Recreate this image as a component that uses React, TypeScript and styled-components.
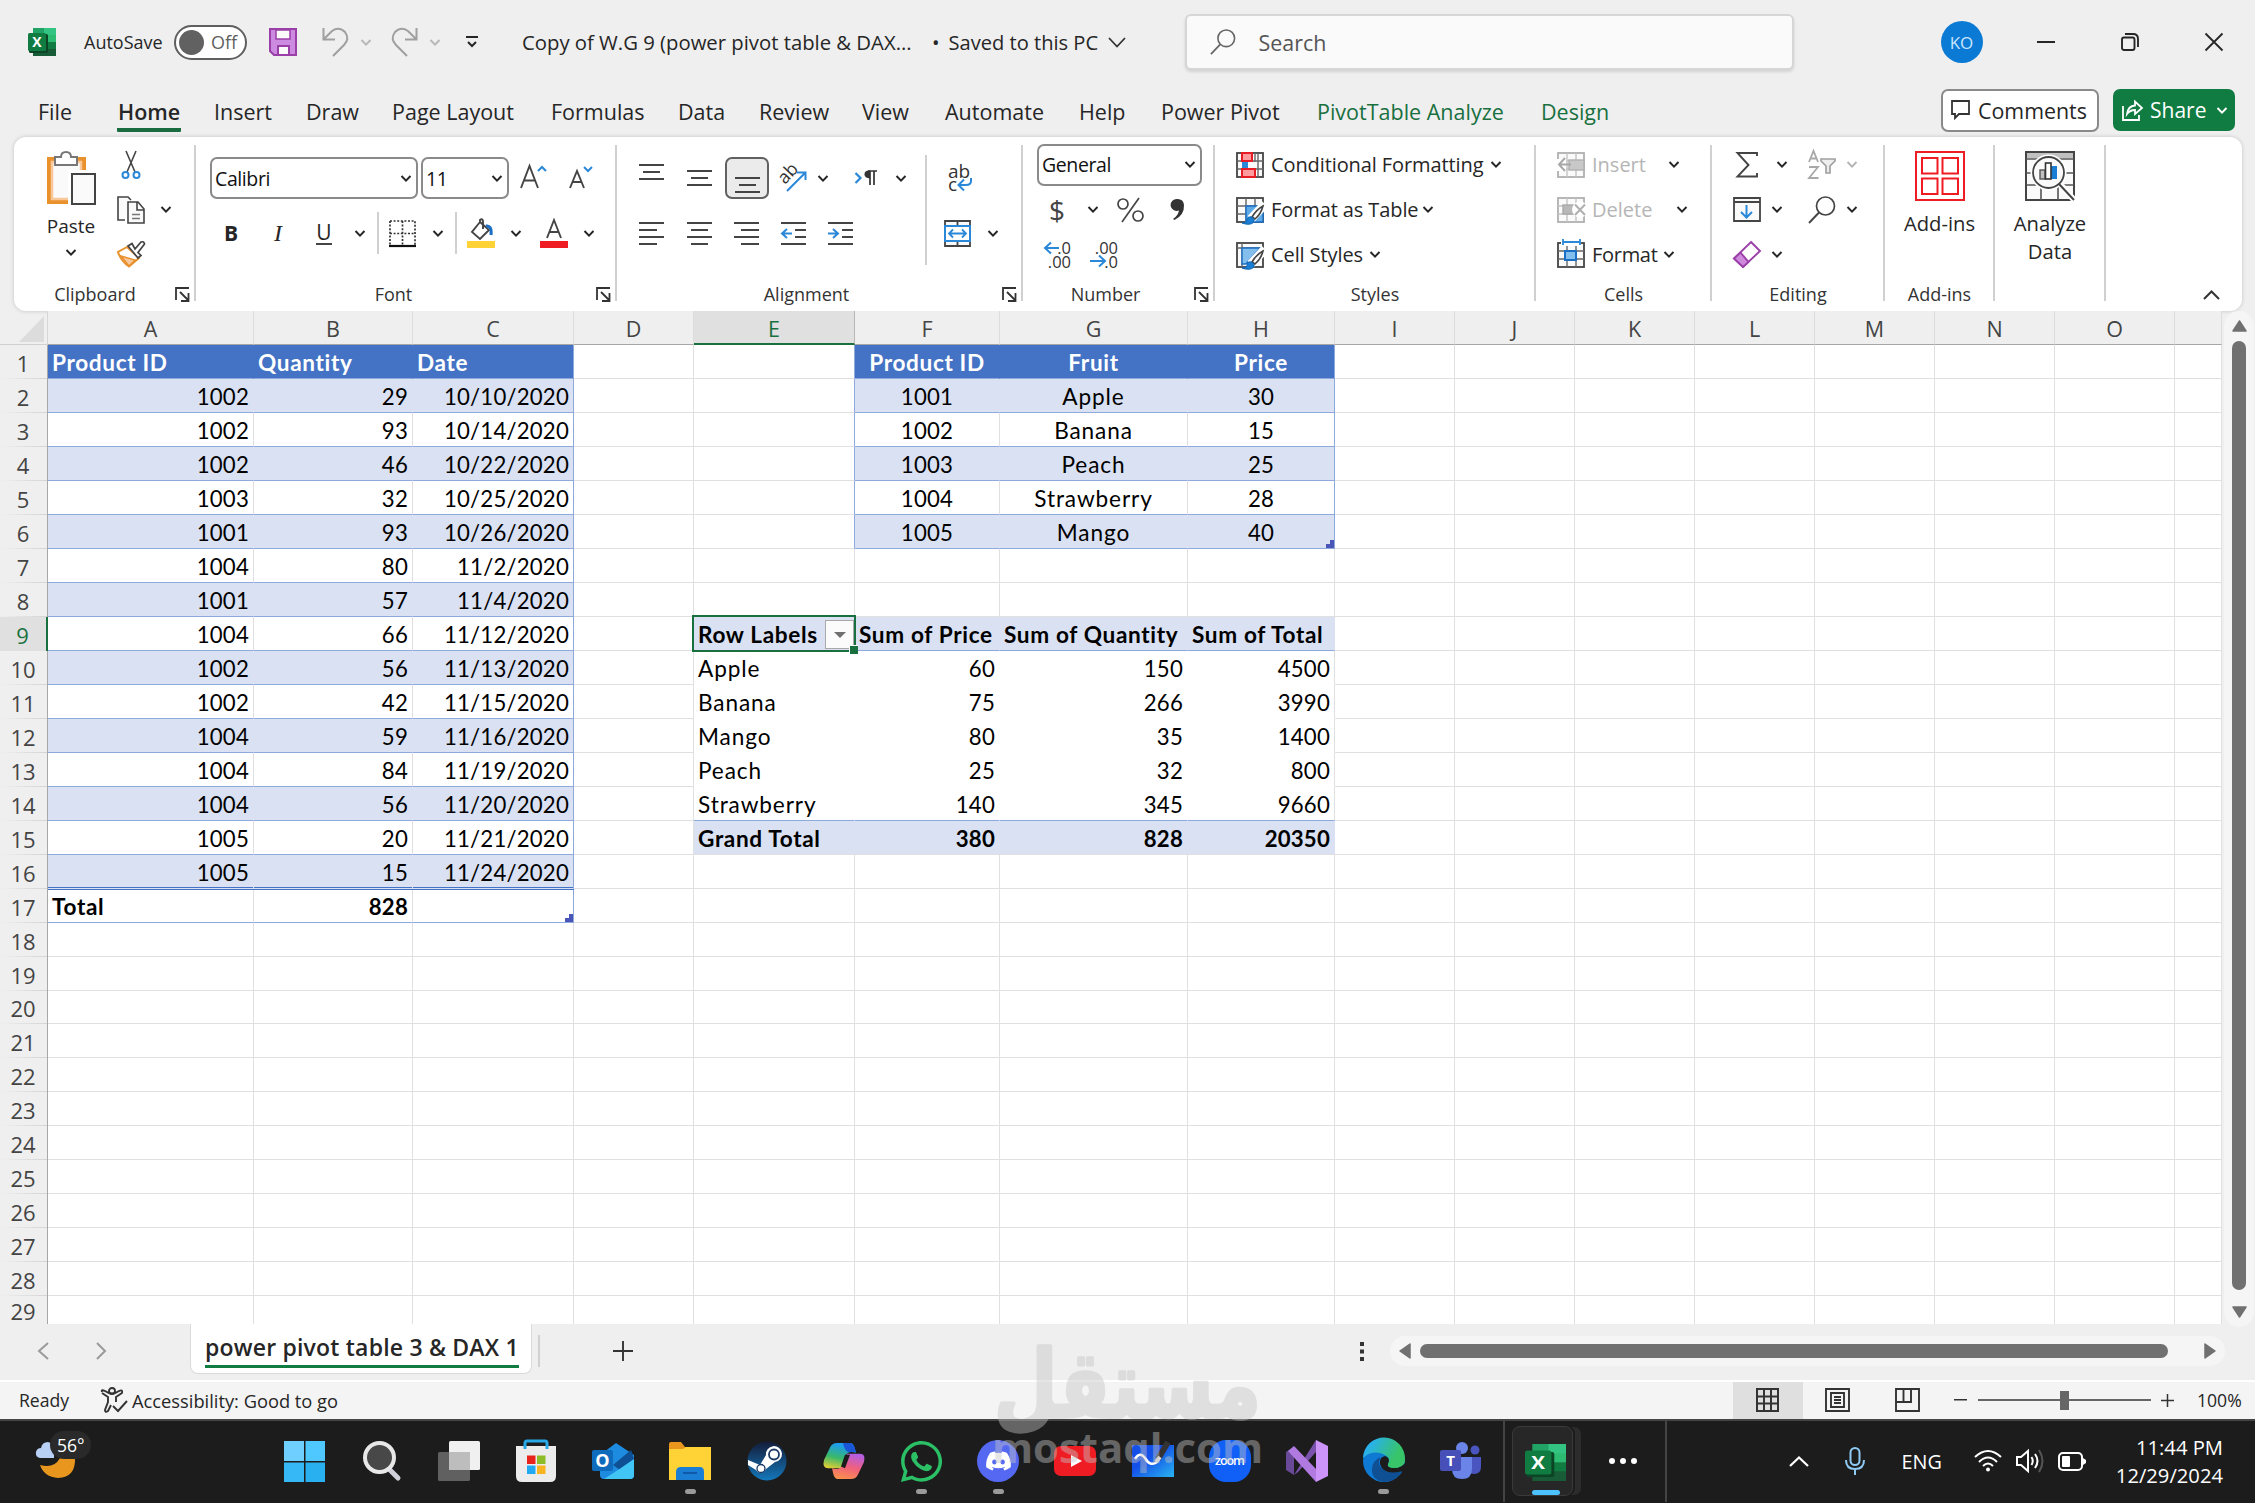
import React from 'react';
import styled, { createGlobalStyle, css } from 'styled-components';
import { FaDiscord, FaWhatsapp } from 'react-icons/fa';

const UI = `'Open Sans', 'Noto Sans', sans-serif`;
const CELL = `Lato, 'Open Sans', sans-serif`;

const GlobalStyle = createGlobalStyle`
    * { box-sizing: border-box; }
    body { margin: 0; background: #efefef; font-family: ${UI}; color: #262626; overflow: hidden; }
    svg { display: block; flex: none; overflow: visible; }
`;

const Window = styled.div`
    position: relative;
    width: 2255px;
    height: 1503px;
    display: flex;
    flex-direction: column;
    overflow: hidden;
    background: #efefef;
`;

/* ---------- shared ---------- */

const Slot = styled.div<{ $w?: number; $ml?: number }>`
    flex: none;
    display: flex;
    align-items: center;
    justify-content: center;
    width: ${p => (p.$w ? p.$w + 'px' : 'auto')};
    margin-left: ${p => p.$ml || 0}px;
`;

const Label = styled.div<{ $size?: number; $w?: number; $ml?: number; $color?: string; $ls?: number }>`
    flex: none;
    white-space: nowrap;
    font-size: ${p => p.$size || 20}px;
    letter-spacing: ${p => p.$ls || 0}px;
    width: ${p => (p.$w ? p.$w + 'px' : 'auto')};
    margin-left: ${p => p.$ml || 0}px;
    color: ${p => p.$color || '#262626'};
`;

const Chevron = ({ ml = 0, color = '#262626', w = 20 }: { ml?: number; color?: string; w?: number }) => (
    <Slot $w={w} $ml={ml}>
        <svg width="10" height="7" viewBox="0 0 10 7">
            <path d="M0.5 1 L5 5.6 L9.5 1" fill="none" stroke={color} strokeWidth="2" />
        </svg>
    </Slot>
);

const ExcelIcon = ({ w, h }: { w: number; h: number }) => (
    <svg width={w} height={h} viewBox="0 0 28 28" preserveAspectRatio="none">
        <rect x="5" y="0" width="12" height="14" fill="#21a366" />
        <rect x="16" y="0" width="12" height="14" fill="#33c481" />
        <rect x="16" y="7" width="12" height="7" fill="#2cbb70" />
        <rect x="5" y="14" width="12" height="14" fill="#185c37" />
        <rect x="16" y="14" width="12" height="7" fill="#107c41" />
        <rect x="16" y="21" width="12" height="7" fill="#185c37" />
        <rect x="1" y="6" width="19" height="19" rx="1.5" fill="#0b4526" />
        <rect x="0" y="5" width="18" height="18" rx="1.5" fill="#107c41" />
        <text x="9" y="19" textAnchor="middle" fontSize="14" fontWeight="700" fill="#fff">X</text>
    </svg>
);

/* ---------- title bar ---------- */

const TitleBar = styled.div`
    flex: none;
    height: 84px;
    display: flex;
    align-items: center;
`;

const Toggle = styled.div`
    flex: none;
    width: 73px;
    height: 35px;
    border: 2px solid #5f5f5f;
    border-radius: 18px;
    background: #fff;
    display: flex;
    align-items: center;
    padding-left: 3px;
    font-size: 18px;
    color: #5f5f5f;
`;

const Knob = styled.div`
    width: 25px;
    height: 25px;
    border-radius: 50%;
    background: #616161;
    margin-right: 7px;
`;

const SearchBox = styled.div`
    flex: none;
    width: 609px;
    height: 56px;
    margin-left: 59px;
    display: flex;
    align-items: center;
    padding-left: 23px;
    border: 2px solid #d6d6d6;
    border-radius: 6px;
    background: #fafafa;
    box-shadow: 0 2px 3px rgba(0, 0, 0, 0.12);
`;

const Avatar = styled.div`
    flex: none;
    width: 42px;
    height: 42px;
    margin-left: 147px;
    border-radius: 50%;
    background: #0a7ad4;
    color: #c9e6ff;
    font-size: 17px;
    display: flex;
    align-items: center;
    justify-content: center;
`;

/* ---------- tabs ---------- */

const TabBar = styled.div`
    flex: none;
    height: 53px;
    display: flex;
    padding-left: 37px;
`;

const Tab = styled.div<{ $w: number; $color?: string }>`
    flex: none;
    width: ${p => p.$w}px;
    font-size: 21.5px;
    line-height: 30px;
    padding-top: 13px;
    padding-left: 1px;
    white-space: nowrap;
    color: ${p => p.$color || '#262626'};
`;

const ActiveTab = styled.span`
    display: inline-block;
    width: 64px;
    height: 35px;
    margin-left: -1px;
    padding-left: 1px;
    font-weight: 600;
    border-bottom: 4px solid #186c3f;
    border-radius: 1px;
`;

const CommentsButton = styled.div`
    flex: none;
    width: 158px;
    height: 43px;
    margin: 5px 14px 0 auto;
    border: 2px solid #8a8a8a;
    border-radius: 7px;
    background: #fff;
    display: flex;
    align-items: center;
    padding-left: 8px;
`;

const ShareButton = styled.div`
    flex: none;
    width: 122px;
    height: 42px;
    margin: 5px 20px 0 0;
    border-radius: 7px;
    background: #107c41;
    display: flex;
    align-items: center;
    padding-left: 9px;
`;

/* ---------- ribbon ---------- */

const Ribbon = styled.div`
    flex: none;
    width: 2228px;
    height: 174px;
    margin-left: 14px;
    padding-top: 8px;
    display: flex;
    align-items: flex-start;
    background: #fff;
    border-radius: 12px;
    box-shadow: 0 0 4px rgba(0, 0, 0, 0.18);
`;

const GroupBox = styled.div<{ $w: number }>`
    flex: none;
    width: ${p => p.$w}px;
    height: 163px;
    display: flex;
    flex-direction: column;
`;

const GroupBody = styled.div`
    height: 137px;
    display: flex;
`;

const GroupFooter = styled.div`
    height: 26px;
    display: flex;
    align-items: center;
    font-size: 18px;
    color: #333;
`;

const FooterText = styled.div<{ $w: number }>`
    width: ${p => p.$w}px;
    padding: 0 0 2px 1px;
    text-align: center;
`;

const Divider = styled.div<{ $h?: number; $ml?: number; $mt?: number }>`
    flex: none;
    width: 2px;
    height: ${p => p.$h || 156}px;
    margin-left: ${p => p.$ml || 0}px;
    margin-top: ${p => p.$mt || 0}px;
    background: #d0d0d0;
`;

const ThreeRows = styled.div`
    flex: none;
    margin-top: -3px;
    display: grid;
    grid-template-rows: repeat(3, 45px);
    height: 135px;
`;

const TwoRows = styled.div<{ $w?: number }>`
    flex: none;
    width: ${p => (p.$w ? p.$w + 'px' : 'auto')};
    padding-top: 6px;
    display: grid;
    grid-template-rows: 54px 56px;
    height: 116px;
`;

const Row = styled.div`
    display: flex;
    align-items: center;
`;

const BigButton = styled.div<{ $w: number; $ml?: number }>`
    width: ${p => p.$w}px;
    margin-left: ${p => p.$ml || 0}px;
    padding-top: 6px;
    display: flex;
    flex-direction: column;
    align-items: center;
    text-align: center;
    font-size: 20px;
    line-height: 28px;
`;

const BigLabel = styled.div<{ $size?: number; $mt?: number }>`
    margin-top: ${p => p.$mt ?? 8}px;
    font-size: ${p => p.$size || 20.2}px;
`;

const Combo = styled.div<{ $w: number; $ml: number }>`
    flex: none;
    width: ${p => p.$w}px;
    height: 42px;
    margin-left: ${p => p.$ml}px;
    display: flex;
    align-items: center;
    justify-content: space-between;
    padding: 0 0 0 3px;
    border: 2px solid #8a8a8a;
    border-radius: 7px;
    font-size: 19.5px;
    letter-spacing: -0.4px;
    color: #111;
`;

const Letter = styled.div<{ $kind: 'b' | 'i' | 'u' }>`
    font-size: 21px;
    line-height: 24px;
    ${p => p.$kind === 'b' && css`font-weight: 700;`}
    ${p => p.$kind === 'i' && css`font-style: italic; font-family: 'Liberation Serif', serif; font-size: 24px;`}
    ${p => p.$kind === 'u' && css`border-bottom: 2px solid #444; line-height: 22px;`}
`;

const Pressed = styled.div`
    width: 44px;
    height: 42px;
    border: 2px solid #616161;
    border-radius: 7px;
    background: #ebebeb;
    display: flex;
    justify-content: center;
    padding-top: 18px;
`;

const Raised = styled.div`
    padding-bottom: 12px;
`;

const Launcher = styled.svg<{ $mr: number }>`
    margin: 0 ${p => p.$mr}px 1px auto;
`;

const Collapse = styled.div`
    margin: 145px 22px 0 auto;
`;

const GroupView = ({ w, fw, name, launch, children }: { w: number; fw?: number; name?: string; launch?: number; children?: React.ReactNode }) => (
    <>
        <GroupBox $w={w}>
            <GroupBody>{children}</GroupBody>
            <GroupFooter>
                <FooterText $w={fw || w}>{name}</FooterText>
                {launch !== undefined && (
                    <Launcher $mr={launch} width="15" height="15" viewBox="0 0 15 15">
                        <path d="M1 13 V1 H14 M5 5 L13 13 M13.5 6 V14 H6" fill="none" stroke="#333" strokeWidth="1.8" />
                    </Launcher>
                )}
            </GroupFooter>
        </GroupBox>
        <Divider />
    </>
);

const Lines = ({ rows }: { rows: [number, number][] }) => (
    <svg width="25" height={(rows.length - 1) * 7 + 2} viewBox={`0 0 25 ${(rows.length - 1) * 7 + 2}`}>
        {rows.map(([x, w], i) => (
            <rect key={i} x={x} y={i * 7} width={w} height="2" fill="#444" />
        ))}
    </svg>
);

const blue = '#2b88d8';

const TableIcon = ({ kind }: { kind: 'cond' | 'table' | 'cell' | 'insert' | 'delete' | 'format' }) => {
    const dim = kind === 'insert' || kind === 'delete';
    const line = dim ? '#b0b0b0' : '#444';
    return (
        <svg width="28" height="26" viewBox="0 0 28 26">
            <rect x="1" y="1" width="26" height="24" fill="#fafafa" stroke={line} strokeWidth="1.8" />
            {kind !== 'cell' && <path d="M1 9 H27 M1 17 H27 M10 1 V25 M19 1 V25" stroke={dim ? '#c4c4c4' : '#666'} strokeWidth="1.4" />}
            {kind === 'cell' && <path d="M1 6 H27 M6 1 V25" stroke="#666" strokeWidth="1.4" />}
            {kind === 'cond' && (
                <>
                    <rect x="13" y="10" width="9" height="6" fill="#fafafa" />
                    <path d="M22 1 V25" stroke="#666" strokeWidth="1.4" />
                    <rect x="6" y="9" width="6" height="8" fill={blue} />
                    <rect x="6" y="1" width="10" height="8" fill="#ff9a9e" stroke="#e81c24" strokeWidth="2" />
                    <rect x="6" y="17" width="13" height="8" fill="#ff9a9e" stroke="#e81c24" strokeWidth="2" />
                </>
            )}
            {(kind === 'table' || kind === 'cell') && (
                <>
                    <path d={kind === 'table' ? 'M10 9 H27 V25 H10 Z' : 'M6 6 H24 L10 22 H6 Z'} fill={kind === 'table' ? '#5ea9e6' : '#83beec'} stroke="#1a6fc4" strokeWidth="1.4" />
                    <path d="M29 7 L15 22" stroke="#fff" strokeWidth="9" />
                    <path d="M27 9 Q20 13 16 20 L19 22 Q25 17 27 9 Z" fill="#fff" stroke="#444" strokeWidth="1.6" />
                    <path d="M16 20 Q11 19 11 24 Q9 26 6 26 Q14 29 18 25 Q19 23 16 20Z" fill="#1a7fd4" stroke="#1464b0" strokeWidth="1" />
                </>
            )}
            {kind === 'insert' && (
                <>
                    <rect x="12" y="8" width="15" height="10" fill="#c8c8c8" stroke="#b0b0b0" strokeWidth="1.4" />
                    <path d="M-1 7 H9 V19 H-1 Z" fill="#fff" />
                    <path d="M8 6 L2 12.5 L8 19 M2 12.5 H14" fill="none" stroke="#a8a8a8" strokeWidth="2" />
                </>
            )}
            {kind === 'delete' && (
                <>
                    <rect x="6" y="8" width="11" height="9" fill="#b8b8b8" stroke="#a8a8a8" strokeWidth="1.4" />
                    <circle cx="23" cy="12.5" r="8" fill="#fff" />
                    <path d="M18 7.5 L28 18 M28 7.5 L18 18" stroke="#b0b0b0" strokeWidth="2" />
                </>
            )}
            {kind === 'format' && (
                <>
                    <rect x="4" y="-2" width="20" height="6" fill="#fff" />
                    <path d="M6 -3 V3 M23 -3 V3 M6 0 H23" stroke={blue} strokeWidth="1.8" />
                    <rect x="8" y="9" width="11" height="9" fill="#83beec" stroke="#1a6fc4" strokeWidth="2" />
                </>
            )}
        </svg>
    );
};

const Magnifier = ({ w = 28, color = '#444' }: { w?: number; color?: string }) => (
    <svg width={w} height={w} viewBox="0 0 28 28">
        <circle cx="17.5" cy="10" r="9" fill="none" stroke={color} strokeWidth="1.7" />
        <path d="M11 16.5 L1 27" stroke={color} strokeWidth="1.9" />
    </svg>
);

const DecimalIcon = ({ inc }: { inc?: boolean }) => (
    <svg width="29" height="28" viewBox="0 0 29 28" fontSize="16.5" fill="#333">
        <text x="28" y="12.5" textAnchor="end">{inc ? '.00' : '.0'}</text>
        <text x="28" y="27" textAnchor="end">{inc ? '.0' : '.00'}</text>
        {inc ? (
            <path d="M0 20 H14 M9 14.5 L15 20 L9 25.5" fill="none" stroke={blue} strokeWidth="2" />
        ) : (
            <path d="M16 7 H2 M8 1.5 L2 7 L8 12.5" fill="none" stroke={blue} strokeWidth="2" />
        )}
    </svg>
);

const PasteChevron = styled.div`
    height: 20px;
    display: flex;
    align-items: center;
    margin-top: 2px;
`;

const RibbonView = () => (
    <Ribbon>
        <GroupView w={180} fw={161} name="Clipboard" launch={4}>
            <BigButton $w={80} $ml={17}>
                <svg width="50" height="54" viewBox="0 0 50 54">
                    <rect x="3" y="8" width="35" height="43" fill="#fafafa" stroke="#e8912d" strokeWidth="4" />
                    <rect x="6" y="11" width="29" height="37" fill="none" stroke="#f8c79a" strokeWidth="2.5" />
                    <path d="M9 14 V6 H15 Q15 1 20 1 Q25 1 25 6 H31 V14 Z" fill="#fff" stroke="#777" strokeWidth="2" />
                    <rect x="22" y="19" width="28" height="35" fill="#fff" />
                    <rect x="26" y="23" width="23" height="30" fill="#fafafa" stroke="#444" strokeWidth="2" />
                </svg>
                <BigLabel $size={19} $mt={7}>Paste</BigLabel>
                <PasteChevron><Chevron /></PasteChevron>
            </BigButton>
            <ThreeRows>
                <Row>
                    <Slot $w={36} $ml={2}>
                        <svg width="18" height="28" viewBox="0 0 18 28">
                            <path d="M4 0 L13 21 M14 0 L5 21" stroke="#444" strokeWidth="1.6" />
                            <circle cx="3.5" cy="24" r="3" fill="#fff" stroke={blue} strokeWidth="2" />
                            <circle cx="14.5" cy="24" r="3" fill="#fff" stroke={blue} strokeWidth="2" />
                        </svg>
                    </Slot>
                </Row>
                <Row>
                    <Slot $w={36} $ml={2}>
                        <svg width="28" height="28" viewBox="0 0 28 28">
                            <path d="M8 24 H1 V1 H11 L14 4" fill="#fafafa" stroke="#444" strokeWidth="1.6" />
                            <path d="M11 6 H21 L27 13 V27 H11 Z M20 6 V14 H27" fill="#fafafa" stroke="#444" strokeWidth="1.6" />
                            <path d="M15 18.5 H23 M15 22.5 H23" stroke="#777" strokeWidth="1.4" />
                        </svg>
                    </Slot>
                    <Chevron ml={7} />
                </Row>
                <Row>
                    <Slot $w={36} $ml={2}>
                        <svg width="28" height="27" viewBox="0 0 28 27">
                            <path d="M10 6 L1 11 Q4 20 12 25.5 L22 17 Z" fill="#fff" stroke="#e8912d" strokeWidth="2" />
                            <path d="M4 15 L18 19 L12 25 Z" fill="#f8c79a" stroke="#e8912d" strokeWidth="1.4" />
                            <path d="M11 5 L15 2.5 L18 8 L24 1 Q27 0 27.5 3 L21 11.5 L24 14.5 L21 17 Z" fill="#fff" stroke="#444" strokeWidth="1.7" />
                        </svg>
                    </Slot>
                </Row>
            </ThreeRows>
        </GroupView>

        <GroupView w={419} fw={394} name="Font" launch={4}>
            <TwoRows>
                <Row>
                    <Combo $w={208} $ml={14}>Calibri<Chevron /></Combo>
                    <Combo $w={88} $ml={3}>11<Chevron /></Combo>
                    <Slot $w={27} $ml={11}>
                        <svg width="27" height="26" viewBox="0 0 27 26">
                            <path d="M1 23 L9.5 1 L18 23 M4 15.5 H15" fill="none" stroke="#444" strokeWidth="1.9" />
                            <path d="M18 6 L22 2 L26 6" fill="none" stroke={blue} strokeWidth="2" />
                        </svg>
                    </Slot>
                    <Slot $w={25} $ml={22}>
                        <svg width="25" height="26" viewBox="0 0 25 26">
                            <path d="M1 23 L8 6 L15 23 M3.5 17 H12.5" fill="none" stroke="#444" strokeWidth="1.9" />
                            <path d="M15 2 L19 6 L23 2" fill="none" stroke={blue} strokeWidth="2" />
                        </svg>
                    </Slot>
                </Row>
                <Row>
                    <Slot $w={30} $ml={20}><Letter $kind="b">B</Letter></Slot>
                    <Slot $w={30} $ml={17}><Letter $kind="i">I</Letter></Slot>
                    <Slot $w={30} $ml={16}><Letter $kind="u">U</Letter></Slot>
                    <Chevron ml={11} />
                    <Divider $h={42} $ml={7} />
                    <Slot $w={27} $ml={10}>
                        <svg width="27" height="27" viewBox="0 0 27 27">
                            <path d="M1 1 H26 V25 M1 1 V25 M13.5 1 V25 M1 13.5 H26" fill="none" stroke="#333" strokeWidth="1.7" strokeDasharray="2 1.6" />
                            <path d="M0 26 H27" stroke="#111" strokeWidth="2.2" />
                        </svg>
                    </Slot>
                    <Chevron ml={12} />
                    <Divider $h={42} $ml={7} />
                    <Slot $w={28} $ml={10}>
                        <svg width="28" height="29" viewBox="0 0 28 29">
                            <path d="M13 3 L22 11 L13 20 L5 13 Z M13 3 V1 Q15 -1 16 2 V10" fill="none" stroke="#444" strokeWidth="1.9" />
                            <path d="M19 7 Q25 6 24 16" fill="none" stroke="#1a6fc4" strokeWidth="3" />
                            <rect x="0" y="22" width="28" height="7" fill="#ffd335" />
                        </svg>
                    </Slot>
                    <Chevron ml={11} />
                    <Slot $w={28} $ml={14}>
                        <svg width="28" height="29" viewBox="0 0 28 29">
                            <path d="M7 19 L14 1 L21 19 M9.5 13 H18.5" fill="none" stroke="#444" strokeWidth="1.9" />
                            <rect x="0" y="22" width="28" height="7" fill="#ef1c24" />
                        </svg>
                    </Slot>
                    <Chevron ml={11} />
                </Row>
            </TwoRows>
        </GroupView>

        <GroupView w={404} fw={378} name="Alignment" launch={4}>
            <TwoRows $w={308}>
                <Row>
                    <Slot $w={25} $ml={22}><Raised><Lines rows={[[0, 25], [4, 17], [0, 25]]} /></Raised></Slot>
                    <Slot $w={25} $ml={23}><Lines rows={[[0, 25], [4, 17], [0, 25]]} /></Slot>
                    <Slot $w={44} $ml={13}><Pressed><Lines rows={[[0, 25], [4, 17], [0, 25]]} /></Pressed></Slot>
                    <Slot $w={30} $ml={9}>
                        <svg width="30" height="28" viewBox="0 0 30 28">
                            <text x="0" y="0" fontSize="18" fill="#333" transform="translate(7 21) rotate(-47)">ab</text>
                            <path d="M9 27 L27 9 M19 8.5 H27.5 V16" fill="none" stroke={blue} strokeWidth="2" />
                        </svg>
                    </Slot>
                    <Chevron ml={5} />
                    <Slot $w={22} $ml={22}>
                        <svg width="22" height="16" viewBox="0 0 22 16">
                            <path d="M0.5 3 L5.5 8 L0.5 13" fill="none" stroke={blue} strokeWidth="2.2" />
                            <path d="M15 8.5 Q9.5 8 9.5 4.2 Q9.5 0.5 14 0.5 H15 Z" fill="#333" />
                            <path d="M13 1 H22 M15 1 V15 M19 1 V15" stroke="#333" strokeWidth="1.7" />
                        </svg>
                    </Slot>
                    <Chevron ml={14} />
                </Row>
                <Row>
                    <Slot $w={25} $ml={22}><Lines rows={[[0, 25], [0, 18], [0, 25], [0, 18]]} /></Slot>
                    <Slot $w={25} $ml={23}><Lines rows={[[0, 25], [4, 17], [0, 25], [4, 17]]} /></Slot>
                    <Slot $w={25} $ml={22}><Lines rows={[[0, 25], [7, 18], [0, 25], [7, 18]]} /></Slot>
                    {[0, 1].map(i => (
                        <Slot key={i} $w={25} $ml={22}>
                            <svg width="25" height="23" viewBox="0 0 25 23">
                                <path d="M0 1 H25 M14 8 H25 M14 15 H25 M0 22 H25" stroke="#444" strokeWidth="2" />
                                <path d={i ? 'M0 11.5 H9 M5 7 L10 11.5 L5 16' : 'M11 11.5 H2 M6 7 L1 11.5 L6 16'} fill="none" stroke={blue} strokeWidth="2" />
                            </svg>
                        </Slot>
                    ))}
                </Row>
            </TwoRows>
            <Divider $h={110} $mt={10} />
            <TwoRows>
                <Row>
                    <Slot $w={24} $ml={21}>
                        <svg width="24" height="28" viewBox="0 0 24 28" fontSize="19" fill="#333">
                            <text x="0" y="14">ab</text>
                            <text x="0" y="27">c</text>
                            <path d="M23 14 V17 Q23 21 18 21 H11 M16 15.5 L10.5 21 L16 26.5" fill="none" stroke={blue} strokeWidth="2" />
                        </svg>
                    </Slot>
                </Row>
                <Row>
                    <Slot $w={27} $ml={17}>
                        <svg width="27" height="27" viewBox="0 0 27 27">
                            <path d="M1 1 H26 V26 H1 Z M13.5 1 V26" fill="#fafafa" stroke="#444" strokeWidth="1.8" />
                            <rect x="1" y="6" width="25" height="15" fill="#fff" stroke={blue} strokeWidth="2" />
                            <path d="M5 13.5 H22 M9 9.5 L5 13.5 L9 17.5 M18 9.5 L22 13.5 L18 17.5" fill="none" stroke={blue} strokeWidth="1.8" />
                        </svg>
                    </Slot>
                    <Chevron ml={12} />
                </Row>
            </TwoRows>
        </GroupView>

        <GroupView w={190} fw={164} name="Number" launch={4}>
            <ThreeRows>
                <Row><Combo $w={165} $ml={14}>General<Chevron /></Combo></Row>
                <Row>
                    <Slot $w={24} $ml={22}><Label $size={28} $color="#444">$</Label></Slot>
                    <Chevron ml={14} />
                    <Slot $w={27} $ml={14}>
                        <svg width="27" height="26" viewBox="0 0 27 26" fill="none" stroke="#444" strokeWidth="1.7">
                            <circle cx="6" cy="7" r="5" />
                            <circle cx="21" cy="19" r="5" />
                            <path d="M22 1 L5 25" />
                        </svg>
                    </Slot>
                    <Slot $w={18} $ml={25}>
                        <svg width="14" height="21" viewBox="0 0 14 21">
                            <path d="M6.5 0 A6.3 6 0 1 0 8 11.6 Q7 17 2 20 L3.5 21 Q13.5 16 13 6 Q12.5 0 6.5 0Z" fill="#333" />
                        </svg>
                    </Slot>
                </Row>
                <Row>
                    <Slot $w={29} $ml={20}><DecimalIcon /></Slot>
                    <Slot $w={29} $ml={18}><DecimalIcon inc /></Slot>
                </Row>
            </ThreeRows>
        </GroupView>

        <GroupView w={319} fw={321} name="Styles">
            <ThreeRows>
                <Row><Slot $w={28} $ml={21}><TableIcon kind="cond" /></Slot><Label $ml={7} $w={215} $ls={-0.1}>Conditional Formatting</Label><Chevron /></Row>
                <Row><Slot $w={28} $ml={21}><TableIcon kind="table" /></Slot><Label $ml={7} $w={147} $ls={-0.1}>Format as Table</Label><Chevron /></Row>
                <Row><Slot $w={28} $ml={21}><TableIcon kind="cell" /></Slot><Label $ml={7} $w={94} $ls={-0.1}>Cell Styles</Label><Chevron /></Row>
            </ThreeRows>
        </GroupView>

        <GroupView w={174} name="Cells">
            <ThreeRows>
                <Row><Slot $w={28} $ml={21}><TableIcon kind="insert" /></Slot><Label $ml={7} $w={72} $color="#b5b5b5">Insert</Label><Chevron /></Row>
                <Row><Slot $w={28} $ml={21}><TableIcon kind="delete" /></Slot><Label $ml={7} $w={80} $color="#b5b5b5">Delete</Label><Chevron /></Row>
                <Row><Slot $w={28} $ml={21}><TableIcon kind="format" /></Slot><Label $ml={7} $w={67} $ls={-0.3}>Format</Label><Chevron /></Row>
            </ThreeRows>
        </GroupView>

        <GroupView w={171} name="Editing">
            <ThreeRows>
                <Row>
                    <Slot $w={28} $ml={21}>
                        <svg width="22" height="26" viewBox="0 0 22 26">
                            <path d="M21 4 V1 H1.5 L12.5 13 L1.5 24.5 H21 V21" fill="none" stroke="#444" strokeWidth="1.9" />
                        </svg>
                    </Slot>
                    <Chevron ml={11} />
                    <Slot $w={28} $ml={16}>
                        <svg width="28" height="29" viewBox="0 0 28 29">
                            <path d="M1 12 L5.5 1 L10 12 M2.5 8.5 H8.5 M1 17 H10 L1 28 H10.5" fill="none" stroke="#a8a8a8" strokeWidth="1.8" />
                            <path d="M13 9 H27 V11 L22 16 V23 H18 V16 L13 11 Z" fill="#eee" stroke="#a0a0a0" strokeWidth="1.7" />
                        </svg>
                    </Slot>
                    <Chevron ml={6} color="#b5b5b5" />
                </Row>
                <Row>
                    <Slot $w={28} $ml={21}>
                        <svg width="28" height="25" viewBox="0 0 28 25">
                            <path d="M1 1 H27 V24 H1 Z M1 5 H27" fill="#fafafa" stroke="#444" strokeWidth="1.8" />
                            <path d="M13.5 8 V20 M8 15 L13.5 20.5 L19 15" fill="none" stroke={blue} strokeWidth="2" />
                        </svg>
                    </Slot>
                    <Chevron ml={6} />
                    <Slot $w={28} $ml={21}><Magnifier /></Slot>
                    <Chevron ml={6} />
                </Row>
                <Row>
                    <Slot $w={28} $ml={21}>
                        <svg width="28" height="27" viewBox="0 0 28 27">
                            <path d="M18 1 L27 10 L10 26 L1 17.5 Z" fill="#fff" stroke="#9a3fa8" strokeWidth="1.9" />
                            <path d="M7.5 11.5 L15.5 21 L10 26 L1 17.5 Z" fill="#cf8ade" stroke="#9a3fa8" strokeWidth="1.9" />
                        </svg>
                    </Slot>
                    <Chevron ml={6} />
                </Row>
            </ThreeRows>
        </GroupView>

        <GroupView w={108} fw={110} name="Add-ins">
            <BigButton $w={108} $ml={1}>
                <svg width="50" height="50" viewBox="0 0 50 50" fill="#fff" stroke="#ef1c24" strokeWidth="2">
                    <rect x="1" y="1" width="48" height="48" />
                    <rect x="7" y="7" width="15.5" height="15.5" />
                    <rect x="27.5" y="7" width="15.5" height="15.5" />
                    <rect x="7" y="27.5" width="15.5" height="15.5" />
                    <rect x="27.5" y="27.5" width="15.5" height="15.5" />
                </svg>
                <BigLabel>Add-ins</BigLabel>
            </BigButton>
        </GroupView>

        <GroupView w={109}>
            <BigButton $w={109} $ml={1}>
                <svg width="50" height="50" viewBox="0 0 50 50">
                    <rect x="1" y="1" width="48" height="48" fill="#fafafa" stroke="#444" strokeWidth="2" />
                    <rect x="2" y="2" width="46" height="5" fill="#c0c0c0" />
                    <path d="M1 8 H49 M1 22 H49 M1 34 H49 M16 34 V49 M33 34 V49" stroke="#555" strokeWidth="1.6" />
                    <circle cx="23.5" cy="21.5" r="18" fill="#fff" />
                    <path d="M35 33 L50 50" stroke="#fff" strokeWidth="6" />
                    <circle cx="23.5" cy="21.5" r="15.5" fill="#fafafa" stroke="#444" strokeWidth="1.8" />
                    <path d="M34 33 L49 49" stroke="#444" strokeWidth="2" />
                    <rect x="15" y="19" width="5" height="9" fill="#c0c0c0" stroke="#555" strokeWidth="1.4" />
                    <rect x="26" y="15" width="6" height="13" fill="#1a7fd4" />
                    <rect x="20.5" y="12" width="5.5" height="16" fill="#fff" stroke="#333" strokeWidth="1.6" />
                </svg>
                <BigLabel>Analyze<br />Data</BigLabel>
            </BigButton>
        </GroupView>
        <Collapse>
            <svg width="17" height="10" viewBox="0 0 17 10">
                <path d="M1 9 L8.5 1.5 L16 9" fill="none" stroke="#333" strokeWidth="2" />
            </svg>
        </Collapse>
    </Ribbon>
);

/* ---------- sheet ---------- */

const LINE = '#e0e0e0';
const EDGE = '#8ea9db';
const BAND = '#d9e1f2';
const HEAD = '#4472c4';

const columns: [string, number][] = [
    ['A', 206], ['B', 159], ['C', 161], ['D', 120], ['E', 161], ['F', 145], ['G', 188], ['H', 147],
    ['I', 120], ['J', 120], ['K', 120], ['L', 120], ['M', 120], ['N', 120], ['O', 120], ['', 47],
];

const orders = [
    ['1002', '29', '10/10/2020'], ['1002', '93', '10/14/2020'], ['1002', '46', '10/22/2020'],
    ['1003', '32', '10/25/2020'], ['1001', '93', '10/26/2020'], ['1004', '80', '11/2/2020'],
    ['1001', '57', '11/4/2020'], ['1004', '66', '11/12/2020'], ['1002', '56', '11/13/2020'],
    ['1002', '42', '11/15/2020'], ['1004', '59', '11/16/2020'], ['1004', '84', '11/19/2020'],
    ['1004', '56', '11/20/2020'], ['1005', '20', '11/21/2020'], ['1005', '15', '11/24/2020'],
];

const fruits = [
    ['1001', 'Apple', '30'], ['1002', 'Banana', '15'], ['1003', 'Peach', '25'],
    ['1004', 'Strawberry', '28'], ['1005', 'Mango', '40'],
];

const pivot = [
    ['Row Labels', 'Sum of Price', 'Sum of Quantity', 'Sum of Total'],
    ['Apple', '60', '150', '4500'], ['Banana', '75', '266', '3990'], ['Mango', '80', '35', '1400'],
    ['Peach', '25', '32', '800'], ['Strawberry', '140', '345', '9660'],
    ['Grand Total', '380', '828', '20350'],
];

type CellData = {
    text?: string;
    align?: string;
    bold?: boolean;
    color?: string;
    fill: string;
    right: string;
    bottom: string;
    corner?: boolean;
    double?: boolean;
};

function getCell(row: number, col: number): CellData {
    const cell: CellData = { fill: '#fff', right: LINE, bottom: LINE };
    if (col <= 2 && row <= 17) {
        cell.bottom = EDGE;
        if (row === 1) {
            cell.text = ['Product ID', 'Quantity', 'Date'][col];
            cell.bold = true;
            cell.color = '#fff';
            cell.fill = HEAD;
            cell.right = HEAD;
        } else if (row === 17) {
            cell.text = ['Total', '828', ''][col];
            cell.align = col ? 'flex-end' : 'flex-start';
            cell.bold = true;
            cell.corner = col === 2;
        } else {
            cell.text = orders[row - 2][col];
            cell.align = 'flex-end';
            if (row % 2 === 0) {
                cell.fill = BAND;
                cell.right = BAND;
            }
            cell.double = row === 16;
        }
        if (col === 2) cell.right = EDGE;
    }
    if (row <= 6 && col >= 4 && col <= 7) {
        if (col === 4) {
            cell.right = EDGE;
            return cell;
        }
        cell.bottom = EDGE;
        cell.align = 'center';
        if (row === 1) {
            cell.text = ['Product ID', 'Fruit', 'Price'][col - 5];
            cell.bold = true;
            cell.color = '#fff';
            cell.fill = HEAD;
            cell.right = HEAD;
        } else {
            cell.text = fruits[row - 2][col - 5];
            if (row % 2 === 0) {
                cell.fill = BAND;
                cell.right = BAND;
            }
        }
        if (col === 7) {
            cell.right = EDGE;
            cell.corner = row === 6;
        }
    }
    if (row >= 9 && row <= 15 && col >= 4 && col <= 7) {
        const ends = row === 9 || row === 15;
        cell.text = pivot[row - 9][col - 4];
        cell.bold = ends;
        cell.fill = ends ? BAND : '#fff';
        cell.right = ends ? BAND : col === 7 ? LINE : '#fff';
        cell.bottom = row === 9 || row === 14 ? EDGE : row === 15 ? LINE : '#fff';
        cell.align = col > 4 && row > 9 ? 'flex-end' : 'flex-start';
    }
    return cell;
}

const isNumber = (text?: string) => /^[\d/]+$/.test(text || '');

const SheetArea = styled.div`
    flex: none;
    height: 1013px;
    display: flex;
`;

const Grid = styled.div`
    width: 2222px;
    height: 1014px;
    overflow: hidden;
    border-bottom: 1px solid #d6d6d6;
`;

const HeaderRow = styled.div`
    display: flex;
    height: 34px;
`;

const CornerCell = styled.div`
    width: 48px;
    height: 34px;
    padding: 5px 0 0 19px;
    border-bottom: 1px solid #d0d0d0;
    border-right: 1px solid #d6d6d6;
`;

const ColumnHeader = styled.div<{ $w: number; $active: boolean }>`
    flex: none;
    width: ${p => p.$w}px;
    height: 34px;
    padding-top: 2px;
    display: flex;
    align-items: center;
    justify-content: center;
    font-size: 21.5px;
    color: ${p => (p.$active ? '#19703f' : '#444')};
    background: ${p => (p.$active ? '#e0e0e0' : '#efefef')};
    border-right: 1px solid ${p => (p.$active ? '#b8b8b8' : '#dcdcdc')};
    border-bottom: ${p => (p.$active ? '2px solid #19703f' : '1px solid #a6a6a6')};
`;

const SheetRow = styled.div<{ $h: number }>`
    display: flex;
    height: ${p => p.$h}px;
`;

const RowHeader = styled.div<{ $active: boolean }>`
    flex: none;
    width: 48px;
    padding-top: 1px;
    padding-right: 1px;
    display: flex;
    align-items: center;
    justify-content: center;
    font-size: 22px;
    line-height: 28px;
    color: ${p => (p.$active ? '#19703f' : '#444')};
    background: ${p => (p.$active ? '#e0e0e0' : 'linear-gradient(90deg, #efefef, #d4d4d4) bottom / 100% 1px no-repeat')};
    border-right: ${p => (p.$active ? '2px solid #19703f' : '1px solid #a6a6a6')};
`;

const Cell = styled.div<{ $w: number; $c: CellData }>`
    position: relative;
    flex: none;
    width: ${p => p.$w}px;
    padding: 1px 4px 0 4px;
    display: flex;
    align-items: center;
    justify-content: ${p => p.$c.align || 'flex-start'};
    font-family: ${CELL};
    font-size: ${p => (isNumber(p.$c.text) ? 22.2 : 22.6)}px;
    letter-spacing: ${p => (isNumber(p.$c.text) ? 0.2 : p.$c.bold ? 0.65 : 0.9)}px;
    white-space: nowrap;
    font-weight: ${p => (p.$c.bold ? 700 : 400)};
    color: ${p => p.$c.color || '#000'};
    background: ${p => p.$c.fill};
    border-right: 1px solid ${p => p.$c.right};
    border-bottom: 1px solid ${p => p.$c.bottom};
    ${p => p.$c.double && css`
        border-bottom-color: ${BAND};
        box-shadow: inset 0 -1px 0 ${HEAD}, 0 1px 0 ${HEAD};
        z-index: 1;
    `}
`;

const TableCorner = styled.svg`
    position: absolute;
    right: 0;
    bottom: 0;
`;

// selection frame sits over the borders of the active cell
const Selection = styled.div`
    position: absolute;
    z-index: 2;
    left: -2px;
    top: -2px;
    width: 164px;
    height: 37px;
    border: 2px solid #19703f;
    &::after {
        content: '';
        position: absolute;
        right: -4px;
        bottom: -4px;
        width: 8px;
        height: 8px;
        background: #19703f;
        border: 1px solid #fff;
        border-width: 1px 0 0 1px;
    }
`;

const FilterButton = styled.div`
    position: absolute;
    right: 0;
    top: 3px;
    width: 29px;
    height: 29px;
    background: #fbfbfb;
    border: 1px solid #a8a8a8;
    display: flex;
    align-items: center;
    justify-content: center;
`;

const SheetView = () => (
    <Grid>
        <HeaderRow>
            <CornerCell>
                <svg width="25" height="26" viewBox="0 0 25 26"><path d="M25 0 V26 H0 Z" fill="#dcdcdc" /></svg>
            </CornerCell>
            {columns.map(([name, w]) => (
                <ColumnHeader key={name} $w={w} $active={name === 'E'}>{name}</ColumnHeader>
            ))}
        </HeaderRow>
        {Array.from({ length: 29 }, (_, i) => i + 1).map(row => (
            <SheetRow key={row} $h={row === 20 ? 33 : row === 29 ? 29 : 34}>
                <RowHeader $active={row === 9}>{row}</RowHeader>
                {columns.map(([name, w], col) => {
                    const c = getCell(row, col);
                    return (
                        <Cell key={col} $w={w} $c={c}>
                            {c.text}
                            {c.corner && (
                                <TableCorner width="8" height="8" viewBox="0 0 8 8">
                                    <path d="M4 0 H8 V8 H0 V4 H4 Z" fill="#4a55b8" />
                                </TableCorner>
                            )}
                            {name === 'E' && row === 9 && (
                                <>
                                    <FilterButton>
                                        <svg width="12" height="6" viewBox="0 0 12 6"><path d="M0 0 H12 L6 6 Z" fill="#707070" /></svg>
                                    </FilterButton>
                                    <Selection />
                                </>
                            )}
                        </Cell>
                    );
                })}
            </SheetRow>
        ))}
    </Grid>
);

const VerticalTrack = styled.div`
    width: 30px;
    height: 1016px;
    margin-left: 2px;
    padding: 9px 0 9px;
    border-radius: 15px;
    background: #f5f5f5;
    display: flex;
    flex-direction: column;
    align-items: center;
    justify-content: space-between;
    position: relative;
    z-index: 1;
`;

const VerticalThumb = styled.div`
    width: 14px;
    height: 949px;
    margin: 0 0 7px;
    border-radius: 7px;
    background: #707070;
`;

/* ---------- sheet tabs ---------- */

const SheetTabs = styled.div`
    flex: none;
    height: 56px;
    display: flex;
    align-items: center;
    padding-bottom: 2px;
    background: #efefef;
`;

const SheetTab = styled.div`
    flex: none;
    align-self: flex-start;
    width: 342px;
    height: 50px;
    margin-left: 83px;
    padding: 8px 0 0 14px;
    background: #fff;
    border: 1px solid #dadada;
    border-top: none;
    border-radius: 0 0 8px 8px;
`;

const SheetName = styled.div`
    width: 314px;
    height: 36px;
    line-height: 30px;
    font-size: 23px;
    font-weight: 600;
    letter-spacing: 0.2px;
    white-space: nowrap;
    border-bottom: 3px solid #107c41;
`;

const NavArrows = styled.svg`
    margin-left: 37px;
`;

const MoreDots = styled.svg`
    margin-left: 727px;
`;

const HorizontalTrack = styled.div`
    flex: none;
    width: 835px;
    height: 30px;
    margin-left: 26px;
    padding: 0 9px;
    border-radius: 15px;
    background: #f5f5f5;
    display: flex;
    align-items: center;
`;

const HorizontalThumb = styled.div`
    width: 748px;
    height: 14px;
    margin: 0 36px 0 9px;
    border-radius: 7px;
    background: #707070;
`;

/* ---------- status bar ---------- */

const StatusBar = styled.div`
    flex: none;
    height: 39px;
    display: flex;
    align-items: center;
    background: #f4f4f4;
    border-top: 2px solid #fff;
    padding-bottom: 1px;
`;

const ViewButton = styled.div<{ $active?: boolean }>`
    flex: none;
    width: 70px;
    height: 37px;
    padding: 0 2px 1px 0;
    display: flex;
    align-items: center;
    justify-content: center;
    background: ${p => (p.$active ? '#dfdfdf' : 'transparent')};
`;

const ZoomTrack = styled.div`
    flex: none;
    width: 173px;
    height: 2px;
    margin-left: 11px;
    background: #666;
    display: flex;
    align-items: center;
    padding-left: 82px;
`;

const ZoomThumb = styled.div`
    width: 9px;
    height: 19px;
    background: #666;
`;

/* ---------- taskbar ---------- */

const Taskbar = styled.div`
    flex: none;
    height: 84px;
    display: flex;
    align-items: center;
    background: #1c1c1c;
    border-top: 2px solid #444;
    padding-bottom: 2px;
    color: #fff;
`;

const Weather = styled.div`
    flex: none;
    display: flex;
    width: 266px;
    height: 60px;
    padding-left: 36px;
`;

const AppSlot = styled.div`
    flex: none;
    width: 77.1px;
    height: 72px;
    padding-top: 15px;
    display: flex;
    flex-direction: column;
    align-items: center;
`;

const IconBox = styled.div`
    height: 42px;
    display: flex;
    align-items: center;
`;

const Running = styled.div<{ $active?: boolean }>`
    width: ${p => (p.$active ? 28 : 11)}px;
    height: 5px;
    margin-top: 7px;
    border-radius: 3px;
    background: ${p => (p.$active ? '#4cc2ff' : '#9a9a9a')};
`;

const TaskDivider = styled.div<{ $ml?: number }>`
    flex: none;
    width: 2px;
    height: 82px;
    margin-left: ${p => p.$ml || 0}px;
    background: #444;
`;

const ActiveApp = styled.div`
    flex: none;
    width: 61px;
    height: 70px;
    margin-left: 7px;
    padding: 14px 0 0 7px;
    border: 1px solid #3a3a3a;
    border-radius: 8px;
    background: #272727;
    display: flex;
    flex-direction: column;
    align-items: center;
    box-shadow: 2px 0 0 #1c1c1c, 9px 0 0 -1px #2c2c2c;
`;

const Clock = styled.div`
    margin: 0 32px 0 auto;
    text-align: right;
    font-size: 20.2px;
    line-height: 28.5px;
`;

const apps: { name: string; running?: boolean; icon: React.ReactNode }[] = [
    {
        name: 'start',
        icon: (
            <svg width="41" height="41" viewBox="0 0 41 41">
                <path d="M0 0 H20 V20 H0 Z" fill="#6fd0ff" />
                <path d="M21.5 0 H41 V20 H21.5 Z" fill="#4fc8ff" />
                <path d="M0 21.5 H20 V41 H0 Z" fill="#35b8f5" />
                <path d="M21.5 21.5 H41 V41 H21.5 Z" fill="#28b0f0" />
            </svg>
        ),
    },
    {
        name: 'search',
        icon: (
            <svg width="38" height="40" viewBox="0 0 38 40">
                <path d="M26 28 L35 37" stroke="#d0d0d8" strokeWidth="5" strokeLinecap="round" />
                <circle cx="16.5" cy="16.5" r="14.5" fill="#484848" stroke="#e8e8e8" strokeWidth="4" />
            </svg>
        ),
    },
    {
        name: 'tasks',
        icon: (
            <svg width="42" height="40" viewBox="0 0 42 40">
                <rect x="11" y="0" width="31" height="29" rx="1.5" fill="#f0f0f0" />
                <rect x="0" y="11" width="32" height="29" rx="1.5" fill="#606060" />
                <path d="M11 11 H32 V29 H11 Z" fill="#bdbdbd" />
            </svg>
        ),
    },
    {
        name: 'store',
        icon: (
            <svg width="40" height="42" viewBox="0 0 40 42">
                <path d="M0 6 H40 V36 Q40 42 34 42 H6 Q0 42 0 36 Z" fill="#ececec" />
                <path d="M9 9 V3 Q9 1 11 1 H29 Q31 1 31 3 V9" fill="none" stroke="#29a8e8" strokeWidth="3" />
                <rect x="11" y="15.5" width="8.5" height="8.5" fill="#e8231c" />
                <rect x="21" y="15.5" width="8.5" height="8.5" fill="#8cbc28" />
                <rect x="11" y="25.5" width="8.5" height="8.5" fill="#20a8f0" />
                <rect x="21" y="25.5" width="8.5" height="8.5" fill="#f8b420" />
            </svg>
        ),
    },
    {
        name: 'outlook',
        icon: (
            <svg width="42" height="38" viewBox="0 0 42 38">
                <path d="M8 13 L24 1 L42 13 V33 Q42 37 38 37 H12 Q8 37 8 33 Z" fill="#1d8be0" />
                <path d="M39 8 L21 23 L28 28 L42 17 Z" fill="#0f4f94" />
                <path d="M42 17 V33 Q42 37 38 37 H12 L26 28 Z" fill="#41c5f5" />
                <rect x="0" y="8" width="21" height="21" rx="2" fill="#0f6cbd" />
                <text x="10.5" y="25" textAnchor="middle" fontSize="18" fontWeight="700" fill="#fff">O</text>
            </svg>
        ),
    },
    {
        name: 'explorer',
        running: true,
        icon: (
            <svg width="42" height="38" viewBox="0 0 42 38">
                <path d="M0 2 Q0 0 2 0 H12 L16 5 H42 V20 H0 Z" fill="#e8961e" />
                <path d="M0 7 H14 L17 5 H42 V38 H0 Z" fill="#ffd335" />
                <path d="M7 38 V30 Q7 25 12 25 H31 Q35 25 35 30 V38 Z" fill="#1a7fd4" />
                <path d="M14 31 H28" stroke="#0f5aa8" strokeWidth="2" />
            </svg>
        ),
    },
    {
        name: 'steam',
        icon: (
            <svg width="40" height="42" viewBox="0 0 40 42">
                <defs>
                    <linearGradient id="steam" x1="0" y1="0" x2="0" y2="1">
                        <stop offset="0" stopColor="#141c38" />
                        <stop offset="1" stopColor="#1478bc" />
                    </linearGradient>
                </defs>
                <circle cx="20" cy="21" r="19.5" fill="url(#steam)" />
                <path d="M1 20 L13 25 L19 15 A8 8 0 1 1 28 22 L19 29 A5.5 5.5 0 0 1 9 30 L1 25 Z" fill="#fff" />
                <circle cx="27" cy="14.5" r="5" fill="#fff" stroke="#1b3a66" strokeWidth="1.8" />
                <circle cx="14" cy="28.5" r="4" fill="none" stroke="#1b3a66" strokeWidth="1.3" />
            </svg>
        ),
    },
    {
        name: 'copilot',
        icon: (
            <svg width="42" height="38" viewBox="0 0 42 42" preserveAspectRatio="none">
                <defs>
                    <linearGradient id="cpA" x1="0.3" y1="0" x2="0" y2="1">
                        <stop offset="0" stopColor="#1c9cf0" />
                        <stop offset="0.5" stopColor="#39b86c" />
                        <stop offset="1" stopColor="#f6d02c" />
                    </linearGradient>
                    <linearGradient id="cpB" x1="0.6" y1="0" x2="0.3" y2="1">
                        <stop offset="0" stopColor="#b45ee0" />
                        <stop offset="0.5" stopColor="#f0607e" />
                        <stop offset="1" stopColor="#f8904c" />
                    </linearGradient>
                </defs>
                <path d="M14 1 H28 Q31 2 32 8 L33 12 Q25 9 22 16 L18 29 H5 Q-1 29 1 20 L7 6 Q9 1 14 1Z" fill="url(#cpA)" />
                <path d="M20 1 H28 Q31 2 33 11 H26 Q22 11 20 1Z" fill="#1a56d8" />
                <path d="M28 41 H14 Q11 40 10 34 L9 29 Q17 32 20 25 L24 13 H37 Q43 13 41 22 L35 36 Q33 41 28 41Z" fill="url(#cpB)" />
                <path d="M18 27 L22 14 H27 L22 29 Z" fill="#1c1c1c" />
            </svg>
        ),
    },
    { name: 'whatsapp', running: true, icon: <FaWhatsapp size={47} color="#2bc066" /> },
    {
        name: 'discord',
        running: true,
        icon: (
            <svg width="42" height="42" viewBox="0 0 42 42">
                <circle cx="21" cy="21" r="21" fill="#5568f2" />
                <g transform="translate(8 7.5)"><FaDiscord size={27} color="#fff" /></g>
            </svg>
        ),
    },
    {
        name: 'youtube',
        icon: (
            <svg width="42" height="30" viewBox="0 0 42 30">
                <rect width="42" height="30" rx="7" fill="#ef1c24" />
                <path d="M17 9 L28 15 L17 21 Z" fill="#fff" />
            </svg>
        ),
    },
    {
        name: 'whiteboard',
        icon: (
            <svg width="42" height="34" viewBox="0 0 42 34">
                <defs>
                    <linearGradient id="wb" x1="0" y1="0" x2="1" y2="1">
                        <stop offset="0.4" stopColor="#1450e8" />
                        <stop offset="1" stopColor="#28b4f0" />
                    </linearGradient>
                </defs>
                <rect y="1" width="42" height="32" fill="url(#wb)" />
                <path d="M3 15 Q8 7 13 14 Q18 23 25 18" fill="none" stroke="#fff" strokeWidth="2.6" />
                <path d="M26 15 L36 -2" stroke="#333" strokeWidth="6" />
                <path d="M24 18 L28 13" stroke="#ddd" strokeWidth="4" />
            </svg>
        ),
    },
    {
        name: 'zoom',
        icon: (
            <svg width="42" height="42" viewBox="0 0 42 42">
                <rect width="42" height="42" rx="17" fill="#1060f8" />
                <text x="21" y="25" textAnchor="middle" fontSize="12.5" fontWeight="600" fill="#fff" textLength="30">zoom</text>
            </svg>
        ),
    },
    {
        name: 'visual studio',
        icon: (
            <svg width="42" height="42" viewBox="0 0 42 42">
                <path d="M0 12 L8 7 L8 35 L0 30 Z" fill="#6a4a98" />
                <path d="M8 35 L30 0 V12 L12 32 Z" fill="#7a52ac" />
                <path d="M2 11 L8 6 L30 29 V42 Z" fill="#b07ae0" />
                <path d="M30 0 L42 6 V36 L30 42 Z" fill="#cc94f8" />
            </svg>
        ),
    },
    {
        name: 'edge',
        running: true,
        icon: (
            <svg width="42" height="42" viewBox="0 0 42 42">
                <defs>
                    <linearGradient id="edge" x1="0" y1="0" x2="1" y2="0.4">
                        <stop offset="0.2" stopColor="#28b0f0" />
                        <stop offset="0.9" stopColor="#38c468" />
                    </linearGradient>
                </defs>
                <circle cx="21" cy="21" r="21" fill="#0f7ad4" />
                <path d="M0 18 A21 21 0 0 1 42 19 Q42 28 32 28 Q24 28 25 24 Q28 18 22 15 Q10 9 0 18Z" fill="url(#edge)" />
                <path d="M16 22 Q16 34 39 31 Q33 42 21 42 Q8 40 9 28 Q10 21 17 17Z" fill="#0f4f94" />
                <path d="M25 24 Q23 28 32 28 Q38 28 43 22 L41 31 Q20 36 17 24 Q16 17 22 16 Q28 18 25 24Z" fill="#1c1c1c" />
                <path d="M25 24 Q24 28 32 28 Q42 27 42 19 L34 14 Z" fill="#38c468" />
            </svg>
        ),
    },
    {
        name: 'teams',
        icon: (
            <svg width="42" height="38" viewBox="0 0 42 38">
                <circle cx="22" cy="6" r="6" fill="#6a84e8" />
                <circle cx="35" cy="8" r="4.5" fill="#4a55c0" />
                <path d="M27 15 H41 V25 Q41 32 34 32 Q27 32 27 25Z" fill="#4a55c0" />
                <path d="M12 15 H32 V27 Q32 37 22 37 Q12 37 12 27Z" fill="#6a84e8" />
                <rect x="0" y="8" width="21" height="21" rx="2" fill="#4650b8" />
                <text x="10.5" y="24" textAnchor="middle" fontSize="15" fontWeight="700" fill="#fff">T</text>
            </svg>
        ),
    },
];

const TaskbarView = () => (
    <Taskbar>
        <Weather>
            <svg width="60" height="56" viewBox="0 0 60 56">
                <path d="M4 27 Q-1 26 0 21 Q1 17 5 17 Q6 11 12 11 Q18 12 18 20 V27 Z" fill="#b8d0f4" />
                <path d="M4 34 Q18 38 24 27 H39 Q40 46 22 47 Q8 46 4 34 Z" fill="#e8961e" />
                <rect x="14" y="0" width="41" height="28" rx="14" fill="#2a2a2a" />
                <text x="21" y="21" fontSize="17.5" fill="#fff">56°</text>
            </svg>
        </Weather>
        {apps.map(app => (
            <AppSlot key={app.name}>
                <IconBox>{app.icon}</IconBox>
                {app.running && <Running />}
            </AppSlot>
        ))}
        <TaskDivider $ml={3} />
        <ActiveApp>
            <IconBox><ExcelIcon w={41} h={37} /></IconBox>
            <Running $active />
        </ActiveApp>
        <Slot $w={30} $ml={35}>
            <svg width="28" height="6" viewBox="0 0 28 6" fill="#fff">
                <circle cx="3" cy="3" r="3" /><circle cx="14" cy="3" r="3" /><circle cx="25" cy="3" r="3" />
            </svg>
        </Slot>
        <TaskDivider $ml={27} />
        <Slot $w={20} $ml={122}>
            <svg width="20" height="11" viewBox="0 0 20 11"><path d="M1 10 L10 1.5 L19 10" fill="none" stroke="#fff" strokeWidth="2.2" /></svg>
        </Slot>
        <Slot $w={20} $ml={36}>
            <svg width="20" height="28" viewBox="0 0 20 28" fill="none" stroke="#8fcaf5" strokeWidth="2">
                <rect x="5.5" y="1" width="9" height="17" rx="4.5" />
                <path d="M1 13 Q1 22 10 22 Q19 22 19 13 M10 22 V28" />
            </svg>
        </Slot>
        <Label $size={19.8} $ml={37} $w={72} $color="#fff">ENG</Label>
        <Slot $w={28}>
            <svg width="28" height="22" viewBox="0 0 28 22" fill="none" stroke="#fff" strokeWidth="2">
                <path d="M1 7 Q14 -5 27 7 M5 12 Q14 3 23 12 M9 16 Q14 11 19 16" />
                <circle cx="14" cy="19.5" r="2" fill="#fff" stroke="none" />
            </svg>
        </Slot>
        <Slot $w={28} $ml={14}>
            <svg width="28" height="24" viewBox="0 0 28 24" fill="none" stroke="#fff" strokeWidth="2">
                <path d="M1 8 H5 L12 2 V22 L5 16 H1 Z M15.5 8 Q18 12 15.5 16 M19 5 Q24 12 19 19" />
                <path d="M23 1 Q30 12 23 23" stroke="#555" />
            </svg>
        </Slot>
        <Slot $w={28} $ml={14}>
            <svg width="28" height="19" viewBox="0 0 28 19">
                <rect x="1" y="1" width="23" height="17" rx="4" fill="none" stroke="#fff" strokeWidth="2" />
                <rect x="4" y="4" width="8" height="11" rx="1" fill="#fff" />
                <path d="M25 6 L28 8 V11 L25 13 Z" fill="#fff" />
            </svg>
        </Slot>
        <Clock>11:44 PM<br />12/29/2024</Clock>
    </Taskbar>
);

/* ---------- watermark ---------- */

const Watermark = styled.svg`
    position: absolute;
    left: 992px;
    top: 1344px;
    opacity: 0.43;
    pointer-events: none;
`;

const tabs: [string, number][] = [
    ['File', 80], ['Home', 96], ['Insert', 92], ['Draw', 86], ['Page Layout', 159], ['Formulas', 127],
    ['Data', 81], ['Review', 103], ['View', 83], ['Automate', 134], ['Help', 82], ['Power Pivot', 156],
    ['PivotTable Analyze', 224], ['Design', 90],
];

export default function App() {
    return (
        <Window>
            <GlobalStyle />
            <TitleBar>
                <Slot $w={28} $ml={28}><ExcelIcon w={28} h={28} /></Slot>
                <Label $size={18} $ml={28} $w={90}>AutoSave</Label>
                <Toggle><Knob />Off</Toggle>
                <Slot $w={28} $ml={22}>
                    <svg width="28" height="28" viewBox="0 0 28 28">
                        <path d="M1 1 H27 V27 H5 L1 23 Z" fill="#cc8be0" stroke="#9a3fa8" strokeWidth="2" />
                        <rect x="7" y="2" width="14" height="9" fill="#fafafa" stroke="#9a3fa8" strokeWidth="1.5" />
                        <rect x="9" y="18" width="11" height="9" fill="#fafafa" stroke="#9a3fa8" strokeWidth="2" />
                    </svg>
                </Slot>
                <Slot $w={27} $ml={25}>
                    <svg width="27" height="28" viewBox="0 0 27 28">
                        <path d="M1.5 0 V11.5 H13 M2 11 L10 3 Q17 -2 23 4 Q28 11 22 17 L11 28" fill="none" stroke="#a0a0a0" strokeWidth="2" />
                    </svg>
                </Slot>
                <Chevron ml={7} color="#b8b8b8" />
                <Slot $w={27} $ml={15}>
                    <svg width="27" height="28" viewBox="0 0 27 28">
                        <path d="M25.5 0 V11.5 H14 M25 11 L17 3 Q10 -2 4 4 Q-1 11 5 17 L16 28" fill="none" stroke="#a0a0a0" strokeWidth="2" />
                    </svg>
                </Slot>
                <Chevron ml={7} color="#b8b8b8" />
                <Slot $w={14} $ml={20}>
                    <svg width="12" height="12" viewBox="0 0 12 12">
                        <path d="M0 1 H12 M2 6 L6 10 L10 6" fill="none" stroke="#262626" strokeWidth="2" />
                    </svg>
                </Slot>
                <Label $size={20.3} $ml={43} $w={410}>Copy of W.G 9 (power pivot table &amp; DAX...</Label>
                <Label $size={20}>•</Label>
                <Label $size={20.1} $ml={9} $w={159}>Saved to this PC</Label>
                <svg width="18" height="11" viewBox="0 0 18 11"><path d="M1 1 L9 9.5 L17 1" fill="none" stroke="#333" strokeWidth="1.8" /></svg>
                <SearchBox>
                    <Magnifier w={26} color="#666" />
                    <Label $size={21.4} $ml={23} $color="#555">Search</Label>
                </SearchBox>
                <Avatar>KO</Avatar>
                <Slot $w={18} $ml={54}><svg width="18" height="2"><rect width="18" height="2" fill="#262626" /></svg></Slot>
                <Slot $w={18} $ml={66}>
                    <svg width="18" height="18" viewBox="0 0 18 18" fill="none" stroke="#262626" strokeWidth="1.9">
                        <rect x="1" y="4.5" width="12.5" height="12.5" rx="2" />
                        <path d="M4 1 H12 Q17 1 17 6 V14" />
                    </svg>
                </Slot>
                <Slot $w={18} $ml={66}>
                    <svg width="18" height="18" viewBox="0 0 18 18"><path d="M0.5 0.5 L17.5 17.5 M17.5 0.5 L0.5 17.5" stroke="#262626" strokeWidth="1.8" /></svg>
                </Slot>
            </TitleBar>

            <TabBar>
                {tabs.map(([name, w], i) => (
                    <Tab key={name} $w={w} $color={i > 11 ? '#19703f' : undefined}>
                        {name === 'Home' ? <ActiveTab>{name}</ActiveTab> : name}
                    </Tab>
                ))}
                <CommentsButton>
                    <Slot $w={19}>
                        <svg width="19" height="22" viewBox="0 0 19 22">
                            <path d="M1 1 H18 V14 H8 L4 18 V14 H1 Z" fill="none" stroke="#333" strokeWidth="1.8" />
                        </svg>
                    </Slot>
                    <Label $size={21.4} $ml={8}>Comments</Label>
                </CommentsButton>
                <ShareButton>
                    <svg width="21" height="21" viewBox="0 0 21 21" fill="none" stroke="#fff" strokeWidth="1.8">
                        <path d="M1 6 V20 H17 V15" />
                        <path d="M5 14 Q6 6 13 5.5 V1.5 L20 8 L13 14 V10 Q8 10 5 14 Z" />
                    </svg>
                    <Label $size={21} $ml={7} $color="#fff">Share</Label>
                    <Chevron ml={6} color="#fff" />
                </ShareButton>
            </TabBar>

            <RibbonView />

            <SheetArea>
                <SheetView />
                <VerticalTrack>
                    <svg width="15" height="12" viewBox="0 0 15 12"><path d="M7.5 1 L14 11 H1 Z" fill="#707070" stroke="#707070" strokeWidth="1.5" strokeLinejoin="round" /></svg>
                    <VerticalThumb />
                    <svg width="15" height="12" viewBox="0 0 15 12"><path d="M7.5 11 L14 1 H1 Z" fill="#707070" stroke="#707070" strokeWidth="1.5" strokeLinejoin="round" /></svg>
                </VerticalTrack>
            </SheetArea>

            <SheetTabs>
                <NavArrows width="70" height="18" viewBox="0 0 70 18">
                    <path d="M11 1 L2 9 L11 17 M60 1 L68 9 L60 17" fill="none" stroke="#9a9a9a" strokeWidth="2" />
                </NavArrows>
                <SheetTab><SheetName>power pivot table 3 &amp; DAX 1</SheetName></SheetTab>
                <Divider $h={32} $ml={6} />
                <Slot $w={20} $ml={73}>
                    <svg width="20" height="20" viewBox="0 0 20 20"><path d="M10 0 V20 M0 10 H20" stroke="#333" strokeWidth="1.9" /></svg>
                </Slot>
                <MoreDots width="4" height="19" viewBox="0 0 4 19">
                    <path d="M0 0 H4 V4 H0 Z M0 7.5 H4 V11.5 H0 Z M0 15 H4 V19 H0 Z" fill="#333" />
                </MoreDots>
                <HorizontalTrack>
                    <svg width="12" height="16" viewBox="0 0 12 16"><path d="M1 8 L11 1 V15 Z" fill="#707070" stroke="#707070" strokeWidth="1.5" strokeLinejoin="round" /></svg>
                    <HorizontalThumb />
                    <svg width="12" height="16" viewBox="0 0 12 16"><path d="M11 8 L1 1 V15 Z" fill="#707070" stroke="#707070" strokeWidth="1.5" strokeLinejoin="round" /></svg>
                </HorizontalTrack>
            </SheetTabs>

            <StatusBar>
                <Label $size={17.6} $ml={19} $w={82}>Ready</Label>
                <svg width="27" height="26" viewBox="0 0 27 26" fill="none" stroke="#333" strokeWidth="1.9">
                    <circle cx="11" cy="4" r="3" />
                    <path d="M1 5 Q0 2 4 4 Q11 9 18 4 Q22 2 21 6 L15 10 V15 M1 6 L7 10 V15 L4 23 Q4 26 7 24 L10 18" />
                    <path d="M12 19 L17 24 L26 14" />
                </svg>
                <Label $size={18.3} $ml={4} $w={1601}>Accessibility: Good to go</Label>
                <ViewButton $active>
                    <svg width="23" height="24" viewBox="0 0 23 24"><path d="M1 1 H22 V23 H1 Z M8 1 V23 M15 1 V23 M1 8.5 H22 M1 15.5 H22" fill="none" stroke="#333" strokeWidth="2" /></svg>
                </ViewButton>
                <ViewButton>
                    <svg width="25" height="24" viewBox="0 0 25 24"><path d="M1 1 H24 V23 H1 Z M6 5 H19 V19 H6 Z M9 9 H16 M9 12 H16 M9 15 H16" fill="none" stroke="#333" strokeWidth="1.9" /></svg>
                </ViewButton>
                <ViewButton>
                    <svg width="25" height="24" viewBox="0 0 25 24"><path d="M1 1 H24 V23 H1 Z M1 14 H16 V1 M8.5 1 V14" fill="none" stroke="#333" strokeWidth="1.9" /></svg>
                </ViewButton>
                <Slot $w={13} $ml={11}><svg width="13" height="2"><rect width="13" height="1.5" fill="#333" /></svg></Slot>
                <ZoomTrack><ZoomThumb /></ZoomTrack>
                <Slot $w={13} $ml={10}><svg width="13" height="13"><path d="M6.5 0 V13 M0 6.5 H13" stroke="#333" strokeWidth="1.5" /></svg></Slot>
                <Label $size={17.6} $ml={23}>100%</Label>
            </StatusBar>

            <TaskbarView />

            <Watermark width="271" height="150" viewBox="0 0 271 150" fill="#c5c5c5">
                <text x="269" y="63" transform="scale(1 1.16)" direction="rtl" fontFamily="'DejaVu Sans', sans-serif" fontWeight="700" fontSize="80" stroke="#c5c5c5" strokeWidth="3" strokeLinejoin="round" textLength="267" lengthAdjust="spacingAndGlyphs">مستقل</text>
                <text x="0" y="119" fontFamily={UI} fontWeight="700" fontSize="42" textLength="271" lengthAdjust="spacingAndGlyphs">mostaql.com</text>
            </Watermark>
        </Window>
    );
}
